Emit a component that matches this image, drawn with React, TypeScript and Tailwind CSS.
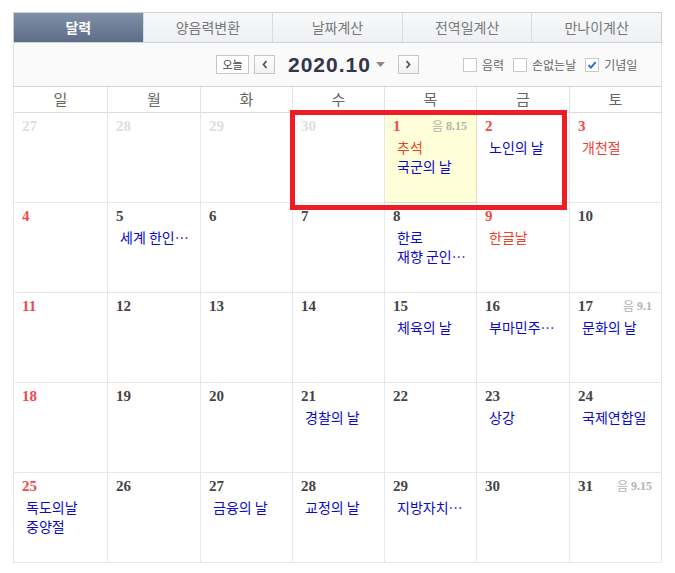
import React from 'react';

type Ev = { text: string; red?: boolean };
type Day = {
  n: number;
  muted?: boolean;
  red?: boolean;
  today?: boolean;
  lunar?: string;
  events?: Ev[];
};

const tabs = ['달력', '양음력변환', '날짜계산', '전역일계산', '만나이계산'];
const weekdays = ['일', '월', '화', '수', '목', '금', '토'];

const weeks: Day[][] = [
  [
    { n: 27, muted: true },
    { n: 28, muted: true },
    { n: 29, muted: true },
    { n: 30, muted: true },
    { n: 1, red: true, today: true, lunar: '8.15', events: [{ text: '추석', red: true }, { text: '국군의 날' }] },
    { n: 2, red: true, events: [{ text: '노인의 날' }] },
    { n: 3, red: true, events: [{ text: '개천절', red: true }] },
  ],
  [
    { n: 4, red: true },
    { n: 5, events: [{ text: '세계 한인…' }] },
    { n: 6 },
    { n: 7 },
    { n: 8, events: [{ text: '한로' }, { text: '재향 군인…' }] },
    { n: 9, red: true, events: [{ text: '한글날', red: true }] },
    { n: 10 },
  ],
  [
    { n: 11, red: true },
    { n: 12 },
    { n: 13 },
    { n: 14 },
    { n: 15, events: [{ text: '체육의 날' }] },
    { n: 16, events: [{ text: '부마민주…' }] },
    { n: 17, lunar: '9.1', events: [{ text: '문화의 날' }] },
  ],
  [
    { n: 18, red: true },
    { n: 19 },
    { n: 20 },
    { n: 21, events: [{ text: '경찰의 날' }] },
    { n: 22 },
    { n: 23, events: [{ text: '상강' }] },
    { n: 24, events: [{ text: '국제연합일' }] },
  ],
  [
    { n: 25, red: true, events: [{ text: '독도의날' }, { text: '중양절' }] },
    { n: 26 },
    { n: 27, events: [{ text: '금융의 날' }] },
    { n: 28, events: [{ text: '교정의 날' }] },
    { n: 29, events: [{ text: '지방자치…' }] },
    { n: 30 },
    { n: 31, lunar: '9.15' },
  ],
];

const cols = 'grid grid-cols-[94px_93px_92px_92px_92px_93px_92px]';
const kr = "font-['Noto_Sans_CJK_KR','Noto_Sans',sans-serif]";

function Checkbox({ label, checked }: { label: string; checked?: boolean }) {
  return (
    <label className="flex items-center gap-[5px]">
      <span className="w-[14px] h-[14px] border border-[#c9c9c9] bg-white flex items-center justify-center">
        {checked && (
          <svg width="10" height="10" viewBox="0 0 10 10">
            <path d="M1.5 5.2 L4 7.6 L8.6 2.2" fill="none" stroke="#2f6fc4" strokeWidth="2" />
          </svg>
        )}
      </span>
      <span className="text-[12px] text-[#666]">{label}</span>
    </label>
  );
}

function Cell({ d }: { d: Day }) {
  const numColor = d.muted ? 'text-[#dedede]' : d.red ? 'text-[#ee4b4b]' : 'text-[#444]';
  return (
    <div
      className={`h-[90px] border-r border-b ${
        d.today ? 'bg-[#fefed8] border-[#dfdeb4]' : 'bg-white border-[#e6e7ea]'
      } pt-[4px]`}
    >
      <div className="flex items-center justify-between pl-[8px] pr-[9px] h-[18px]">
        <span className={`font-['Liberation_Serif',serif] font-bold text-[15px] leading-[18px] ${numColor}`}>{d.n}</span>
        {d.lunar && (
          <span className="flex items-center gap-[3px] text-[#b3b3b3]">
            <span className={`${kr} text-[12px]`}>음</span>
            <span className="font-['Liberation_Serif',serif] font-bold text-[12px]">{d.lunar}</span>
          </span>
        )}
      </div>
      <div className={`mt-[3px] pl-[12px] ${kr} text-[14px] leading-[19px] whitespace-nowrap`}>
        {d.events?.map((e, i) => (
          <div key={i} className={e.red ? 'text-[#ee3f2c]' : 'text-[#0a0acc]'}>
            {e.text}
          </div>
        ))}
      </div>
    </div>
  );
}

export default function App() {
  return (
    <div className={`min-h-[573px] bg-white pt-[12px] pl-[13px] ${kr}`}>
      <div className="relative w-[649px]">
        {/* Tabs */}
        <div className="flex h-[31px] border border-[#ccd1d9]">
          {tabs.map((t, i) => (
            <div
              key={t}
              className={`flex-1 flex items-center justify-center text-[14px] ${
                i > 0 ? 'border-l border-[#d8dce2]' : ''
              } ${
                i === 0
                  ? 'bg-gradient-to-b from-[#808fa8] to-[#5d6d87] text-white font-bold'
                  : 'bg-gradient-to-b from-[#f8f9fa] to-[#eef0f3] text-[#777]'
              }`}
            >
              {t}
            </div>
          ))}
        </div>

        {/* Controls */}
        <div className="h-[44px] bg-[#fafafb] border-x border-[#e2e3e6] border-b border-b-[#d3d3d3] flex items-center">
          <div className="flex items-center ml-[202px]">
            <button className="w-[33px] h-[19px] border border-[#c6c6c6] bg-white text-[11px] text-[#444] leading-none flex items-center justify-center">
              오늘
            </button>
            <button className="ml-[5px] w-[21px] h-[19px] border border-[#c6c6c6] bg-gradient-to-b from-white to-[#f0f0f0] flex items-center justify-center">
              <svg width="8" height="9" viewBox="0 0 8 9">
                <path d="M5.5 1 L2.5 4.5 L5.5 8" fill="none" stroke="#555" strokeWidth="1.8" />
              </svg>
            </button>
            <span className="ml-[13px] font-['Liberation_Sans',Arial,sans-serif] font-bold text-[21px] tracking-[1px] text-[#32354b] leading-none">
              2020.10
            </span>
            <svg className="ml-[5px]" width="9" height="5" viewBox="0 0 9 5">
              <path d="M0 0 H9 L4.5 5 Z" fill="#8a8a8a" />
            </svg>
            <button className="ml-[13px] w-[21px] h-[19px] border border-[#c6c6c6] bg-gradient-to-b from-white to-[#f0f0f0] flex items-center justify-center">
              <svg width="8" height="9" viewBox="0 0 8 9">
                <path d="M2.5 1 L5.5 4.5 L2.5 8" fill="none" stroke="#555" strokeWidth="1.8" />
              </svg>
            </button>
          </div>
          <div className="flex items-center gap-[9px] ml-[44px]">
            <Checkbox label="음력" />
            <Checkbox label="손없는날" />
            <Checkbox label="기념일" checked />
          </div>
        </div>

        {/* Weekday header */}
        <div className={`${cols} border-l border-[#e6e7ea] bg-white`}>
          {weekdays.map((w) => (
            <div
              key={w}
              className="h-[26px] border-r border-b border-[#e3e4e7] border-b-[#dcdcdc] flex items-center justify-center text-[15px] text-[#666]"
            >
              {w}
            </div>
          ))}
        </div>

        {/* Days */}
        <div className={`${cols} border-l border-[#e6e7ea]`}>
          {weeks.flat().map((d, i) => (
            <Cell key={i} d={d} />
          ))}
        </div>

        {/* highlight box */}
        <div className="absolute left-[277px] top-[98px] w-[277px] h-[100px] border-[5px] border-[#ee1c25] pointer-events-none" />
      </div>
    </div>
  );
}
